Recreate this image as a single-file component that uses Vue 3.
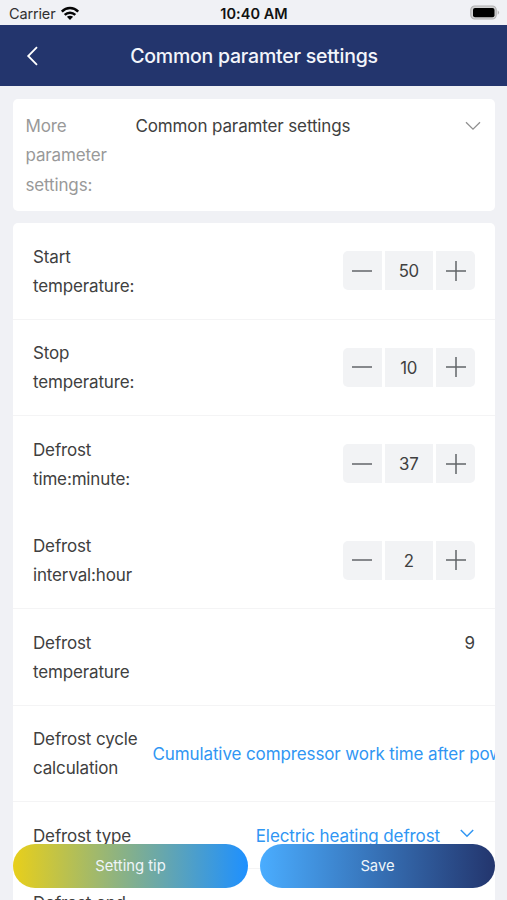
<script setup>
const rows = [
  { lines: ['Start', 'temperature:'], kind: 'stepper', value: 50 },
  { lines: ['Stop', 'temperature:'], kind: 'stepper', value: 10 },
  { lines: ['Defrost', 'time:minute:'], kind: 'stepper', value: 37, plain: true },
  { lines: ['Defrost', 'interval:hour'], kind: 'stepper', value: 2 },
  { lines: ['Defrost', 'temperature'], kind: 'value', value: 9 },
  { lines: ['Defrost cycle', 'calculation'], kind: 'link', value: 'Cumulative compressor work time after power on' },
  { lines: ['Defrost type'], kind: 'select', value: 'Electric heating defrost' },
  { lines: ['Defrost end', 'mode'], kind: 'empty', value: '' },
]
</script>

<template>
  <div class="screen">
    <div class="status">
      <div class="carrier">
        <span>Carrier</span>
        <svg class="wifi" width="20" height="15" viewBox="0 0 20 15">
          <g fill="none" stroke="#050505" stroke-width="2.5">
            <path d="M1.8 5.6C6.5 .9 13.5 .9 18.2 5.6" />
            <path d="M4.7 8.8C7.7 5.9 12.3 5.9 15.3 8.8" />
          </g>
          <path d="M6.9 10.8C8.8 9.3 11.2 9.3 13.1 10.8L10 14Z" fill="#050505" />
        </svg>
      </div>
      <span class="clock">10:40 AM</span>
      <svg class="battery" width="31" height="16" viewBox="0 0 31 16">
        <rect x="1.8" y="1" width="25.4" height="13" rx="4" fill="#d2d2d3" stroke="#b2b2b3" stroke-width="1.2" />
        <rect x="4" y="3" width="21.5" height="9.3" rx="2" fill="#000" />
        <path d="M28.7 5.2Q31.5 7.5 28.7 9.8Z" fill="#b2b2b3" />
      </svg>
    </div>

    <header class="nav">
      <svg class="back" width="14" height="20" viewBox="0 0 14 20">
        <path d="M12 1.2L3.2 10L12 18.8" fill="none" stroke="#fff" stroke-width="1.8" />
      </svg>
      <h1>Common paramter settings</h1>
    </header>

    <main>
      <section class="card picker">
        <span class="picker-label">More parameter settings:</span>
        <span class="picker-value">Common paramter settings</span>
        <svg class="picker-chevron" width="16" height="10" viewBox="0 0 16 10">
          <path d="M1 1.2L8 8.2L15 1.2" fill="none" stroke="#909090" stroke-width="1.3" />
        </svg>
      </section>

      <section class="card list">
        <div v-for="(row, i) in rows" :key="i" class="row" :class="[row.kind, { plain: row.plain }]">
          <div class="label">
            <div v-for="line in row.lines" :key="line">{{ line }}</div>
          </div>
          <div v-if="row.kind === 'stepper'" class="step-control">
            <button class="minus" aria-label="Decrease">
              <svg width="20" height="20" viewBox="0 0 20 20"><path d="M0 10H20" stroke="#626568" stroke-width="1.5" /></svg>
            </button>
            <span class="number">{{ row.value }}</span>
            <button class="plus" aria-label="Increase">
              <svg width="20" height="20" viewBox="0 0 20 20"><path d="M0 10H20M10 0V20" stroke="#626568" stroke-width="1.5" /></svg>
            </button>
          </div>
          <span v-else class="text">{{ row.value }}</span>
          <svg v-if="row.kind === 'select'" class="chevron" width="14" height="9" viewBox="0 0 14 9">
            <path d="M.8 1L7 7.2L13.2 1" fill="none" stroke="#3096f3" stroke-width="1.5" />
          </svg>
        </div>
      </section>
    </main>

    <footer class="actions">
      <button class="tip">Setting tip</button>
      <button class="save">Save</button>
    </footer>
  </div>
</template>

<style>
body { margin: 0; background: #f0f1f5; }
</style>

<style scoped>
.screen {
  position: relative;
  box-sizing: border-box;
  width: 507px;
  height: 900px;
  overflow: hidden;
  background: #f0f1f5;
  color: #404040;
  font: 400 17px/29.3px Inter, "Liberation Sans", sans-serif;
  letter-spacing: -0.15px;
}
button { border: 0; padding: 0; margin: 0; font: inherit; letter-spacing: inherit; }
svg { display: block; flex: none; }
.status {
  display: grid;
  grid-template-columns: 1fr auto 1fr;
  align-items: center;
  height: 25px;
  padding: 2px 7px 0 9px;
  box-sizing: border-box;
  font-size: 14.5px;
  line-height: 22px;
}
.carrier { display: flex; align-items: center; gap: 5px; color: #303030; }
.clock { color: #111; font-weight: 600; letter-spacing: 0.05px; margin-right: 1px; }
.battery { justify-self: end; margin-top: -1px; }
.nav {
  display: grid;
  grid-template-columns: 40px 1fr 40px;
  align-items: center;
  height: 61px;
  padding: 0 25px;
  box-sizing: border-box;
  background: #23356d;
}
h1 {
  margin: 0;
  padding: 3px 0 0 1px;
  color: #f3f5fb;
  font-size: 19.5px;
  font-weight: 500;
  letter-spacing: -0.23px;
  text-align: center;
  white-space: nowrap;
}
main { display: flex; flex-direction: column; gap: 12px; padding: 13px 12px 0 13px; }
.card { background: #fff; border-radius: 5px; box-sizing: border-box; }
.picker { display: flex; height: 112px; padding: 13px 14px 0 12.5px; }
.picker-label { width: 85px; margin-right: 25px; color: #999; }
.picker-value { flex: 1; letter-spacing: -0.13px; }
.picker-chevron { margin-top: 9px; }
.list { overflow: hidden; }
.row {
  display: flex;
  align-items: center;
  justify-content: space-between;
  height: 96.5px;
  padding: 0 20px;
  box-sizing: border-box;
  border-bottom: 1px solid #f4f4f5;
}
.row.plain { border-color: #fff; }
.label { padding-top: 2.2px; white-space: nowrap; }
.step-control { display: flex; gap: 3px; }
.step-control button, .number {
  display: flex;
  align-items: center;
  justify-content: center;
  box-sizing: border-box;
  width: 39px;
  height: 39px;
  background: #f2f3f5;
}
.step-control .number { width: 48.5px; padding-top: 2px; font-size: 16.8px; letter-spacing: -0.3px; }
.step-control .minus { width: 38.5px; border-radius: 5px 0 0 5px; }
.plus { border-radius: 0 5px 5px 0; }
.value { align-items: flex-start; }
.row.value { padding-top: 17.8px; }
.value .text { padding-top: 2.2px; }
.link { justify-content: flex-start; }
.link .label { width: 119.5px; flex: none; }
.text { white-space: nowrap; }
.link .text, .select .text { padding-top: 3px; color: #3096f3; letter-spacing: -0.11px; }
.select { height: 67px; }
.select .label { padding-top: 3px; }
.empty .label { padding-top: 4px; }
.select .text { margin-left: auto; }
.chevron { margin: -3px 1px 0 20px; }
.actions {
  position: absolute;
  left: 13px;
  right: 12px;
  top: 844px;
  display: grid;
  grid-template-columns: 1fr 1fr;
  gap: 12px;
}
.actions button { height: 44px; padding-top: 1.6px; border-radius: 22px; color: #eef5fa; font-size: 14.8px; letter-spacing: 0; }
.actions .tip { background: linear-gradient(90deg, #e8cf1b, #1e90ff); }
.actions .save { background: linear-gradient(90deg, #4aadff, #23356d); }
</style>
